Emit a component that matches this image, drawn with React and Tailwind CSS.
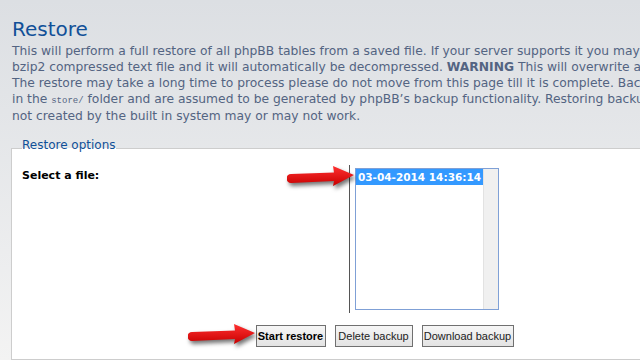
import React from 'react';

function Arrow({ className }) {
    return (
        <svg
            className={className}
            width="70"
            height="26"
            viewBox="0 0 70 26"
            xmlns="http://www.w3.org/2000/svg"
        >
            <defs>
                <linearGradient id="redFill" x1="0" y1="0" x2="0" y2="1">
                    <stop offset="0" stopColor="#ff3030" />
                    <stop offset="1" stopColor="#c80000" />
                </linearGradient>
            </defs>
            <path
                d="M4 10 L47 8.5 L46 2 L67 11 L46 22 L47 17 L4 19 A4.5 4.5 0 0 1 4 10 Z"
                fill="url(#redFill)"
            />
        </svg>
    );
}

export default function App() {
    const textFont = { fontFamily: '"DejaVu Sans", Verdana, sans-serif' };
    const buttonFont = { fontFamily: '"Liberation Sans", Arial, sans-serif' };

    return (
        <div
            className="relative w-[640px] h-[360px] overflow-hidden bg-gradient-to-b from-[#dcdfe3] to-[#f3f3f3]"
            style={textFont}
        >
            <div className="w-[769px] px-[11px] pt-[17px]">
                <h1 className="text-[20px] leading-[24px] text-[#115098] pl-[1px]">Restore</h1>

                <div className="mt-[2px] text-[12.3px] text-[#536482] whitespace-nowrap pl-[1px]">
                    <div className="h-[16px] leading-[16px]">
                        This will perform a full restore of all phpBB tables from a saved file. If your server supports it you may use a gzip or
                    </div>
                    <div className="h-[16px] leading-[16px]">
                        bzip2 compressed text file and it will automatically be decompressed. <b>WARNING</b> This will overwrite any existing data.
                    </div>
                    <div className="h-[16px] leading-[16px]">
                        The restore may take a long time to process please do not move from this page till it is complete. Backups are stored
                    </div>
                    <div className="h-[17px] leading-[16px]">
                        in the <code className="text-[9px]" style={{ fontFamily: '"Liberation Mono", monospace' }}>store/</code> folder and are assumed to be generated by phpBB’s backup functionality. Restoring backups that were
                    </div>
                    <div className="h-[16px] leading-[16px]">
                        not created by the built in system may or may not work.
                    </div>
                </div>

                <fieldset className="mt-[17px] w-[747px] border border-[#cdcdcd] bg-white px-[10px] pb-[12px]">
                    <legend className="relative -top-[3px] px-0 text-[12px] leading-[14px] text-[#115098]">
                        Restore options
                    </legend>

                    <div className="mt-[10px] flex">
                        <div className="w-[328px] border-r border-[#555] pt-[4px] text-[11px] leading-[14px]">
                            <span className="font-bold text-black">Select a file:</span>
                        </div>
                        <div className="ml-[5px] my-[3px] flex w-[144px] h-[142px] border border-[#7fa0d6] bg-white">
                            <div className="flex-1">
                                <div className="h-[16px] bg-[#3399ff] text-white text-[10.5px] leading-[16px] font-bold pl-[2px] whitespace-nowrap">
                                    03-04-2014 14:36:14
                                </div>
                            </div>
                            <div className="w-[15px] bg-[#f0f0f0] border-l border-[#e2e2e2]" />
                        </div>
                    </div>

                    <div className="mt-[12px] flex justify-center gap-[9px] text-[11px] leading-[14px] whitespace-nowrap" style={buttonFont}>
                        <button className="h-[22px] w-[70px] border border-[#707070] bg-gradient-to-b from-[#f6f6f6] to-[#e3e3e3] font-bold text-black">
                            Start restore
                        </button>
                        <button className="h-[22px] w-[78px] border border-[#707070] bg-gradient-to-b from-[#f6f6f6] to-[#e3e3e3] text-[#222]">
                            Delete backup
                        </button>
                        <button className="h-[22px] w-[92px] border border-[#707070] bg-gradient-to-b from-[#f6f6f6] to-[#e3e3e3] text-[#222]">
                            Download backup
                        </button>
                    </div>
                </fieldset>
            </div>

            <Arrow className="absolute left-[287px] top-[164px] drop-shadow-[2px_3px_2px_rgba(0,0,0,0.55)]" />
            <Arrow className="absolute left-[188px] top-[322px] drop-shadow-[2px_3px_2px_rgba(0,0,0,0.55)]" />
        </div>
    );
}
